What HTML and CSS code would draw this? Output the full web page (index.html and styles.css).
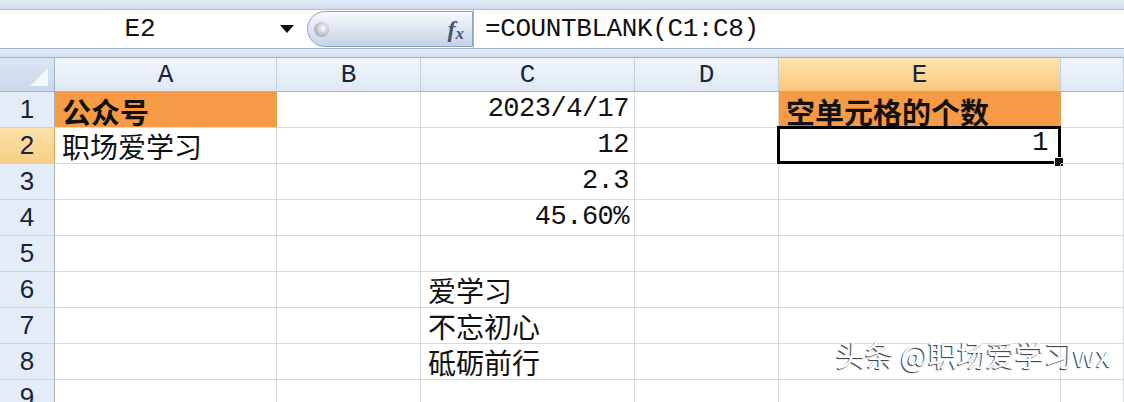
FILE: index.html
```html
<!DOCTYPE html>
<html lang="zh-CN">
<head>
    <meta charset="UTF-8">
    <title>COUNTBLANK</title>
    <link rel="stylesheet" href="styles.css">
</head>
<body>
    <div class="ribbon-edge"></div>

    <div class="formula-bar">
        <div class="name-box">
            <span class="cell-ref">E2</span>
            <span class="drop-arrow"></span>
        </div>
        <div class="fx-pill">
            <span class="knob"></span>
            <span class="fx">f<sub>x</sub></span>
        </div>
        <div class="formula-input">=COUNTBLANK(C1:C8)</div>
    </div>
    <div class="bar-gap"></div>

    <div class="sheet">
        <!-- header row -->
        <div class="corner"><span class="corner-tri"></span></div>
        <div class="col-head">A</div>
        <div class="col-head">B</div>
        <div class="col-head">C</div>
        <div class="col-head">D</div>
        <div class="col-head active">E</div>
        <div class="col-head"></div>

        <!-- row 1 -->
        <div class="row-head">1</div>
        <div class="cell fill bold">公众号</div>
        <div class="cell"></div>
        <div class="cell num">2023/4/17</div>
        <div class="cell"></div>
        <div class="cell fill bold">空单元格的个数</div>
        <div class="cell"></div>

        <!-- row 2 -->
        <div class="row-head active">2</div>
        <div class="cell">职场爱学习</div>
        <div class="cell"></div>
        <div class="cell num">12</div>
        <div class="cell"></div>
        <div class="cell num selected">1<span class="handle"></span></div>
        <div class="cell"></div>

        <!-- row 3 -->
        <div class="row-head">3</div>
        <div class="cell"></div>
        <div class="cell"></div>
        <div class="cell num">2.3</div>
        <div class="cell"></div>
        <div class="cell"></div>
        <div class="cell"></div>

        <!-- row 4 -->
        <div class="row-head">4</div>
        <div class="cell"></div>
        <div class="cell"></div>
        <div class="cell num">45.60%</div>
        <div class="cell"></div>
        <div class="cell"></div>
        <div class="cell"></div>

        <!-- row 5 -->
        <div class="row-head">5</div>
        <div class="cell"></div>
        <div class="cell"></div>
        <div class="cell"></div>
        <div class="cell"></div>
        <div class="cell"></div>
        <div class="cell"></div>

        <!-- row 6 -->
        <div class="row-head">6</div>
        <div class="cell"></div>
        <div class="cell"></div>
        <div class="cell">爱学习</div>
        <div class="cell"></div>
        <div class="cell"></div>
        <div class="cell"></div>

        <!-- row 7 -->
        <div class="row-head">7</div>
        <div class="cell"></div>
        <div class="cell"></div>
        <div class="cell">不忘初心</div>
        <div class="cell"></div>
        <div class="cell"></div>
        <div class="cell"></div>

        <!-- row 8 -->
        <div class="row-head">8</div>
        <div class="cell"></div>
        <div class="cell"></div>
        <div class="cell">砥砺前行</div>
        <div class="cell"></div>
        <div class="cell"></div>
        <div class="cell"></div>

        <!-- row 9 -->
        <div class="row-head">9</div>
        <div class="cell"></div>
        <div class="cell"></div>
        <div class="cell"></div>
        <div class="cell"></div>
        <div class="cell"></div>
        <div class="cell"></div>
    </div>

    <div class="watermark">头条 @职场爱学习wx</div>
</body>
</html>
```

FILE: styles.css
```css
body {
    margin: 0;
    width: 1124px;
    height: 402px;
    overflow: hidden;
    background: #fff;
    font-family: "Noto Sans CJK SC", sans-serif;
    position: relative;
}
.ribbon-edge {
    height: 10px;
    background: linear-gradient(#e3edf8, #cfdcee);
    border-bottom: 1px solid #aebfd6;
    box-sizing: border-box;
}
.formula-bar {
    display: flex;
    height: 38px;
    background: #fff;
}
.name-box {
    width: 307px;
    display: flex;
    align-items: center;
}
.cell-ref {
    width: 280px;
    text-align: center;
    font-family: "Liberation Mono", monospace;
    font-size: 26px;
    color: #111;
}
.drop-arrow {
    width: 0;
    height: 0;
    border-left: 7px solid transparent;
    border-right: 7px solid transparent;
    border-top: 8px solid #111;
}
.fx-pill {
    width: 150px;
    margin: 1px 0;
    border: 1px solid #8da2bf;
    border-radius: 18px 0 0 18px;
    background: linear-gradient(#f7f9fc, #d9e3f0 60%, #c6d3e6);
    display: flex;
    align-items: center;
    justify-content: space-between;
    padding: 0 8px 0 6px;
}
.knob {
    width: 15px;
    height: 15px;
    border-radius: 50%;
    background: radial-gradient(circle at 60% 40%, #fff, #b9bec6 55%, #8d949e);
}
.fx {
    font-family: "Liberation Serif", serif;
    font-style: italic;
    font-weight: bold;
    font-size: 24px;
    color: #4a5670;
    line-height: 1;
}
.fx sub {
    font-size: 17px;
    vertical-align: -2px;
}
.formula-input {
    flex: 1;
    border-left: 1px solid #a9b8cc;
    padding-left: 11px;
    display: flex;
    align-items: center;
    font-family: "Liberation Mono", monospace;
    font-size: 26px;
    letter-spacing: -0.4px;
    color: #111;
}
.bar-gap {
    height: 10px;
    background: linear-gradient(#e6eef8, #d2def0);
    border-top: 1px solid #9fb2cc;
    border-bottom: 1px solid #9fb2cc;
    box-sizing: border-box;
}
.sheet {
    display: grid;
    grid-template-columns: 55px 222px 144px 214px 144px 282px 63px;
    grid-template-rows: 34px repeat(9, 36px);
}
.corner {
    background: linear-gradient(#dbe6f4, #c9d8ec);
    border-right: 1px solid #9eb6ce;
    border-bottom: 1px solid #9eb6ce;
    position: relative;
}
.corner-tri {
    position: absolute;
    right: 6px;
    bottom: 5px;
    width: 0;
    height: 0;
    border-left: 18px solid transparent;
    border-bottom: 18px solid #f4f7fb;
}
.col-head {
    background: linear-gradient(#f1f5fb, #dfe8f4);
    border-right: 1px solid #c2cfdf;
    border-bottom: 1px solid #9eb6ce;
    display: flex;
    align-items: center;
    justify-content: center;
    font-family: "Liberation Mono", monospace;
    font-size: 26px;
    color: #17243a;
}
.col-head.active {
    background: linear-gradient(#fde6b0, #f8c978);
    border-bottom: 1px solid #f0a24a;
}
.row-head {
    background: #e4ecf7;
    border-right: 1px solid #9eb6ce;
    border-bottom: 1px solid #c5d3e4;
    display: flex;
    align-items: center;
    justify-content: center;
    font-family: "Liberation Sans", sans-serif;
    font-size: 26px;
    color: #17243a;
}
.row-head.active {
    background: linear-gradient(#fbe1a9, #f7cf85);
    border-right: 1px solid #f0a24a;
}
.cell {
    border-right: 1px solid #d5dbe5;
    border-bottom: 1px solid #d5dbe5;
    display: flex;
    align-items: flex-end;
    padding: 0 7px 3px;
    font-size: 28px;
    line-height: 1;
    color: #111;
    white-space: nowrap;
    position: relative;
}
.cell.num {
    justify-content: flex-end;
    padding-right: 5px;
    padding-bottom: 4px;
    font-family: "Liberation Mono", monospace;
    font-size: 27px;
    letter-spacing: -0.5px;
}
.cell.fill {
    background: #f79a45;
    border-right-color: #f79a45;
}
.cell.bold {
    font-weight: bold;
    font-size: 29px;
    padding-bottom: 1px;
}
.cell.selected {
    border: 3px solid #000;
    margin: -2px 0 0 -2px;
    padding-right: 10px;
}
.handle {
    position: absolute;
    right: -6px;
    bottom: -6px;
    width: 8px;
    height: 8px;
    background: #111;
    border: 1px solid #fff;
}
.watermark {
    position: absolute;
    left: 836px;
    top: 333px;
    font-size: 29px;
    color: #fff;
    text-shadow: -1px 1px 1px rgba(0, 0, 0, 0.8);
    white-space: nowrap;
}
```
